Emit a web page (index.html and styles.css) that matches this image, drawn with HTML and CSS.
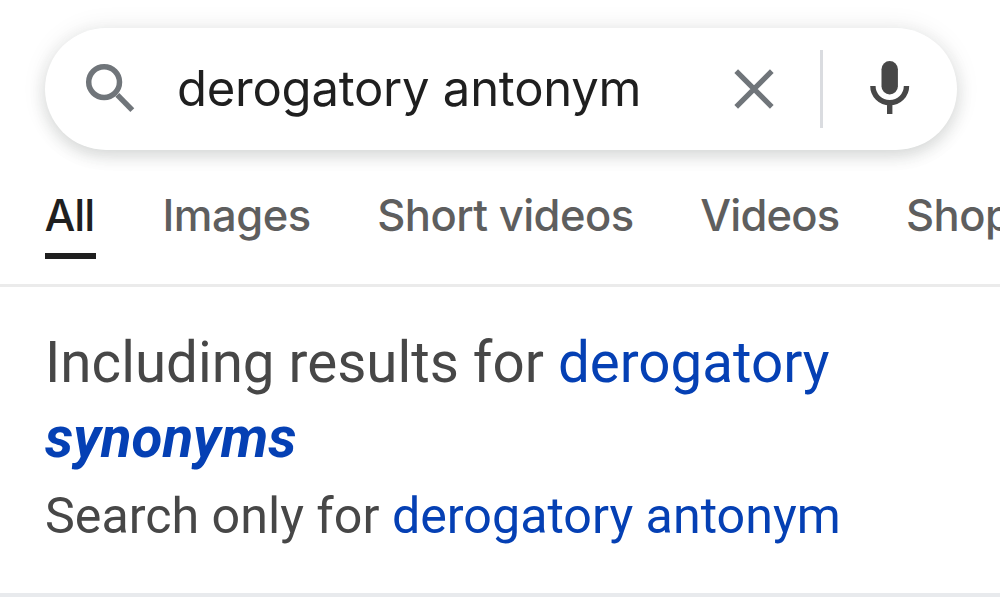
FILE: index.html
```
<!DOCTYPE html>
<html lang="en">
<head>
    <meta charset="UTF-8">
    <meta name="viewport" content="width=device-width, initial-scale=1.0">
    <title>derogatory antonym</title>
    <link rel="stylesheet" href="styles.css">
</head>
<body>
    <header class="header">
        <div class="search-box">
            <svg class="icon-search" viewBox="0 0 50 50">
                <circle cx="19.1" cy="19.1" r="15.4"/>
                <path d="M32.3 31.9L47.3 47.1"/>
            </svg>
            <div class="query">derogatory antonym</div>
            <svg class="icon-clear" viewBox="0 0 40 40">
                <path d="M2.2 2.2L37.8 37.8M37.8 2.2L2.2 37.8"/>
            </svg>
            <div class="divider"></div>
            <svg class="icon-mic" viewBox="0 0 40 54">
                <rect x="11.5" y="1" width="16.4" height="33.4" rx="8.2"/>
                <path d="M2.9 26a16.8 16.8 0 0 0 33.6 0M19.7 43v11"/>
            </svg>
        </div>
        <nav class="tabs">
            <a class="tab active">All</a>
            <a class="tab">Images</a>
            <a class="tab">Short videos</a>
            <a class="tab videos">Videos</a>
            <a class="tab">Shopping</a>
        </nav>
    </header>

    <main class="spelling">
        <p class="including">Including results for <a>derogatory <b><i>synonyms</i></b></a></p>
        <p class="only">Search only for <a>derogatory antonym</a></p>
    </main>
</body>
</html>
```

FILE: styles.css
```
* {
    box-sizing: border-box;
}
body {
    margin: 0;
    height: 597px;
    display: flex;
    flex-direction: column;
    overflow: hidden;
    background-color: #FFFFFF;
    font-family: Roboto, Arial, sans-serif;
    color: #474747;
}
.header {
    height: 287px;
    padding-top: 27.5px;
    border-bottom: 3px solid #EBEBEB;
}
.search-box {
    display: flex;
    align-items: center;
    height: 122.5px;
    margin: 0 43.5px 0 44.5px;
    padding: 0 46.5px 0 40.5px;
    border-radius: 62px;
    background-color: #FFFFFF;
    box-shadow: 0 6px 16px rgba(32, 50, 42, 0.15), 0 0 26px rgba(32, 33, 36, 0.08);
}
.search-box svg {
    flex: none;
    fill: none;
}
.icon-search {
    width: 50px;
    height: 50px;
    margin-bottom: 1px;
    stroke: #70757A;
    stroke-width: 5.5;
}
.query {
    flex: 1;
    margin-left: 42px;
    font-family: Inter, sans-serif;
    font-size: 49px;
    line-height: 62px;
    letter-spacing: -0.25px;
    white-space: nowrap;
    color: #1F1F1F;
}
.icon-clear {
    width: 40px;
    height: 40px;
    stroke: #70757A;
    stroke-width: 5.2;
}
.divider {
    width: 3px;
    height: 78px;
    margin: 0 47px 0 46.5px;
    background-color: #DADCE0;
}
.icon-mic {
    width: 40px;
    height: 54px;
    margin-bottom: 3px;
    stroke: #474747;
    stroke-width: 5.4;
}
.icon-mic rect {
    fill: #474747;
    stroke: none;
}
.tabs {
    display: flex;
    gap: 66.5px;
    padding: 37px 0 0 44.5px;
    overflow: hidden;
    font-family: Inter, sans-serif;
    font-size: 43.5px;
    font-weight: 500;
    line-height: 56px;
    letter-spacing: -0.5px;
    white-space: nowrap;
    color: #5E5E5E;
}
.tab {
    flex: none;
    height: 72px;
}
.tab.active {
    width: 51.5px;
    letter-spacing: -1px;
    color: #1F1F1F;
    border-bottom: 6px solid #1F1F1F;
}
.videos {
    letter-spacing: -0.8px;
}
.spelling {
    flex: 1;
    padding: 39px 44px 0 45px;
    border-bottom: 4px solid #E8EAED;
}
.spelling p {
    margin: 0;
}
.spelling a {
    color: #0540B4;
}
.including {
    font-size: 56.5px;
    line-height: 75px;
}
.only {
    font-size: 50.2px;
    line-height: 80px;
}
```
